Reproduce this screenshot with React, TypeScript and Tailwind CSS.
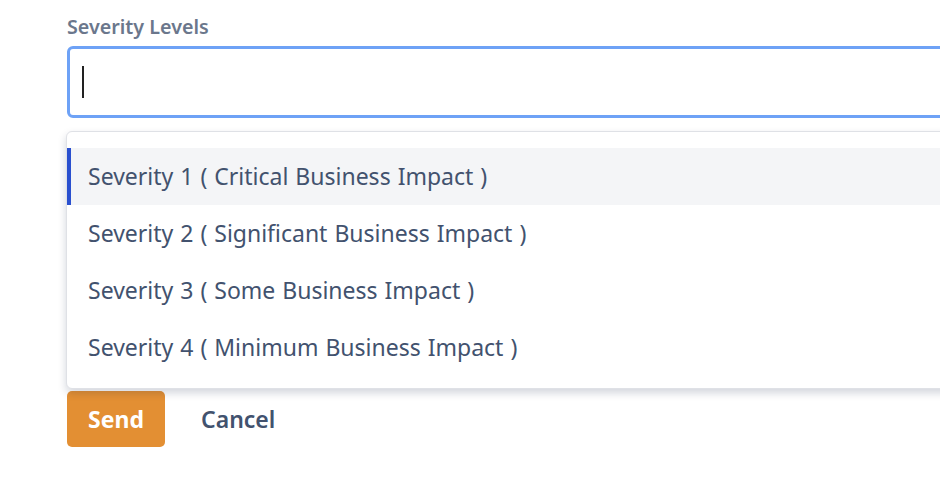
import React from "react";

const options = [
  "Severity 1 ( Critical Business Impact )",
  "Severity 2 ( Significant Business Impact )",
  "Severity 3 ( Some Business Impact )",
  "Severity 4 ( Minimum Business Impact )",
];

const App = () => {
  return (
    <div
      className="w-[940px] h-[492px] overflow-hidden bg-white pl-[67px] pt-[15px]"
      style={{ fontFamily: '"Noto Sans", "Open Sans", sans-serif' }}
    >
      <label className="block text-[19.7px] leading-[24px] font-semibold text-[#6b778c]">
        Severity Levels
      </label>

      <div className="relative mt-[7px] w-[900px]">
        {/* Focused input */}
        <div className="h-[72px] rounded-[6px] border-[3px] border-[#6ea2f6] bg-white flex items-center pl-[12px]">
          <span className="block w-[1.5px] h-[32px] bg-[#222]" />
        </div>

        {/* Dropdown menu */}
        <div className="absolute left-[-1px] top-[85px] w-[900px] rounded-[6px] border border-[#dfe1e6] bg-white pt-[16px] pb-[12px] shadow-[0_4px_8px_rgba(9,30,66,0.18)] z-10">
          {options.map((opt, i) => (
            <div
              key={opt}
              className={
                i === 0
                  ? "h-[57px] flex items-center pl-[17px] border-l-[4px] border-[#2a50cf] bg-[#f4f5f7] text-[23px] [word-spacing:1px] text-[#42526e]"
                  : "h-[57px] flex items-center pl-[21px] text-[23px] [word-spacing:1px] text-[#42526e]"
              }
            >
              {opt}
            </div>
          ))}
        </div>

        {/* Actions */}
        <div className="mt-[273px] flex items-center gap-[36px]">
          <button className="w-[98px] h-[56px] rounded-[5px] bg-[#e38f33] text-white text-[23px] font-bold pt-[1px]">
            Send
          </button>
          <button className="text-[23px] font-semibold text-[#42526e] pt-[1px]">
            Cancel
          </button>
        </div>
      </div>
    </div>
  );
};

export default App;
